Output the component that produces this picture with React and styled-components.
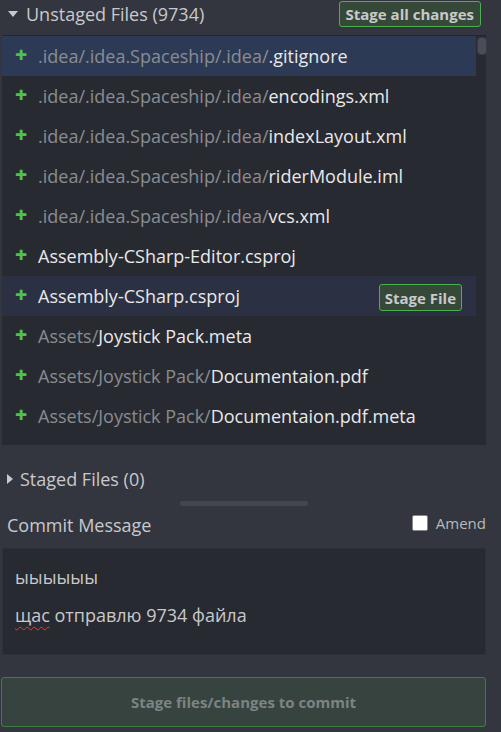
import styled, { createGlobalStyle } from 'styled-components';

const GlobalStyle = createGlobalStyle`
  html, body {
    margin: 0;
    padding: 0;
    background: #33363e;
  }
  body {
    font-family: "Open Sans", "Noto Sans", sans-serif;
    color: #c8c9cc;
  }
`;

const files = [
  { dir: '.idea/.idea.Spaceship/.idea/', name: '.gitignore' },
  { dir: '.idea/.idea.Spaceship/.idea/', name: 'encodings.xml' },
  { dir: '.idea/.idea.Spaceship/.idea/', name: 'indexLayout.xml' },
  { dir: '.idea/.idea.Spaceship/.idea/', name: 'riderModule.iml' },
  { dir: '.idea/.idea.Spaceship/.idea/', name: 'vcs.xml' },
  { dir: '', name: 'Assembly-CSharp-Editor.csproj' },
  { dir: '', name: 'Assembly-CSharp.csproj' },
  { dir: 'Assets/', name: 'Joystick Pack.meta' },
  { dir: 'Assets/Joystick Pack/', name: 'Documentaion.pdf' },
  { dir: 'Assets/Joystick Pack/', name: 'Documentaion.pdf.meta' },
];

const App = () => {
  return (
    <Page>
      <GlobalStyle />
      <Header>
        <Caret $open />
        <HeaderTitle>Unstaged Files (9734)</HeaderTitle>
        <GreenButton>Stage all changes</GreenButton>
      </Header>
      <FileList>
        <Rows>
          {files.map((f, i) => (
            <Row key={i} $state={i === 0 ? 'selected' : i === 6 ? 'hover' : ''}>
              <Plus>+</Plus>
              <Path>
                <Dir>{f.dir}</Dir>
                <Name>{f.name}</Name>
              </Path>
              {i === 6 && <SmallButton>Stage File</SmallButton>}
            </Row>
          ))}
        </Rows>
        <Scrollbar>
          <Thumb />
        </Scrollbar>
      </FileList>
      <StagedHeader>
        <Caret />
        <HeaderTitle>Staged Files (0)</HeaderTitle>
      </StagedHeader>
      <Splitter />
      <CommitHeader>
        <CommitLabel>Commit Message</CommitLabel>
        <AmendLabel>
          <Check />
          Amend
        </AmendLabel>
      </CommitHeader>
      <MessageBox>
        <MessageLine>ыыыыыы</MessageLine>
        <MessageLine>
          <Misspelled>щас</Misspelled> отправлю 9734 файла
        </MessageLine>
      </MessageBox>
      <CommitButton>Stage files/changes to commit</CommitButton>
    </Page>
  );
};

const Page = styled.div`
  width: 501px;
  height: 732px;
  display: flex;
  flex-direction: column;
  box-sizing: border-box;
  padding: 1px 15px 0 2px;
`;

const Header = styled.div`
  height: 26px;
  display: flex;
  align-items: center;
  padding-left: 6px;
  margin-bottom: 8px;
`;

const Caret = styled.span`
  width: 0;
  height: 0;
  margin-right: ${({ $open }) => ($open ? '8px' : '7px')};
  ${({ $open }) =>
    $open
      ? `border-left: 5px solid transparent;
         border-right: 5px solid transparent;
         border-top: 6px solid #c8c9cc;`
      : `border-top: 5px solid transparent;
         border-bottom: 5px solid transparent;
         border-left: 6px solid #c8c9cc;`}
`;

const HeaderTitle = styled.span`
  font-size: 18px;
  color: #c8c9cc;
  flex: 1;
`;

const GreenButton = styled.button`
  font-family: "Open Sans", sans-serif;
  font-weight: 700;
  font-size: 15px;
  color: #c8c9cc;
  background: #364837;
  border: 1px solid #4caf50;
  border-radius: 3px;
  height: 26px;
  padding: 0 6px;
  margin-right: 5px;
`;

const FileList = styled.div`
  height: 410px;
  background: #282a31;
  display: flex;
  border-top: 1px solid #23252b;
  box-sizing: border-box;
`;

const Rows = styled.div`
  flex: 1;
  display: flex;
  flex-direction: column;
`;

const Row = styled.div`
  height: 40px;
  flex: none;
  display: flex;
  align-items: center;
  padding-left: 13px;
  background: ${({ $state }) =>
    $state === 'selected' ? '#2d3a55' : $state === 'hover' ? '#2b3143' : 'transparent'};
`;

const Plus = styled.span`
  color: #4ec24e;
  font-weight: 800;
  font-size: 21px;
  width: 23px;
  line-height: 1;
  margin-top: -3px;
`;

const Path = styled.span`
  flex: 1;
  font-size: 18px;
  white-space: nowrap;
`;

const Dir = styled.span`
  color: #8a8c92;
`;

const Name = styled.span`
  color: #e8e8ea;
`;

const SmallButton = styled(GreenButton)`
  margin-right: 14px;
  height: 27px;
  padding: 0 5px;
  margin-top: 3px;
`;

const Scrollbar = styled.div`
  width: 10px;
  padding-top: 1px;
  display: flex;
  flex-direction: column;
`;

const Thumb = styled.div`
  width: 8px;
  height: 16px;
  margin-left: 1px;
  border-radius: 4px;
  background: #4a4d58;
  border: 1px solid #3a3c45;
`;

const StagedHeader = styled.div`
  display: flex;
  align-items: center;
  padding-left: 5px;
  margin-top: 23px;
  height: 22px;
`;

const Splitter = styled.div`
  width: 128px;
  height: 5px;
  background: #43464f;
  border-radius: 2px;
  align-self: center;
  margin: 11px 0 0 -1px;
`;

const CommitHeader = styled.div`
  display: flex;
  align-items: center;
  height: 24px;
  padding: 0 0 0 5px;
  margin-top: 7px;
`;

const CommitLabel = styled.span`
  flex: 1;
  font-size: 18px;
  color: #c8c9cc;
`;

const AmendLabel = styled.label`
  display: flex;
  align-items: center;
  gap: 8px;
  font-size: 15px;
  color: #b8b9bc;
  margin-top: -4px;
`;

const Check = styled.span`
  width: 14px;
  height: 14px;
  background: #fff;
  border: 1px solid #888;
  border-radius: 2px;
`;

const MessageBox = styled.div`
  margin-top: 11px;
  height: 107px;
  box-sizing: border-box;
  background: #282a31;
  border: 1px solid #2d3037;
  padding: 16px 12px 0;
  display: flex;
  flex-direction: column;
  gap: 14px;
`;

const MessageLine = styled.div`
  font-size: 18px;
  color: #c8c9cc;
  line-height: 24px;
`;

const Misspelled = styled.span`
  text-decoration: underline wavy #e53935;
  text-decoration-thickness: 1px;
  text-underline-offset: 4px;
`;

const CommitButton = styled.button`
  margin: 22px 0 0 -1px;
  height: 50px;
  font-family: "Open Sans", sans-serif;
  font-weight: 700;
  font-size: 15px;
  color: #7d8385;
  background: #37433f;
  border: 1px solid #3f7d45;
  border-radius: 3px;
`;

export default App;
